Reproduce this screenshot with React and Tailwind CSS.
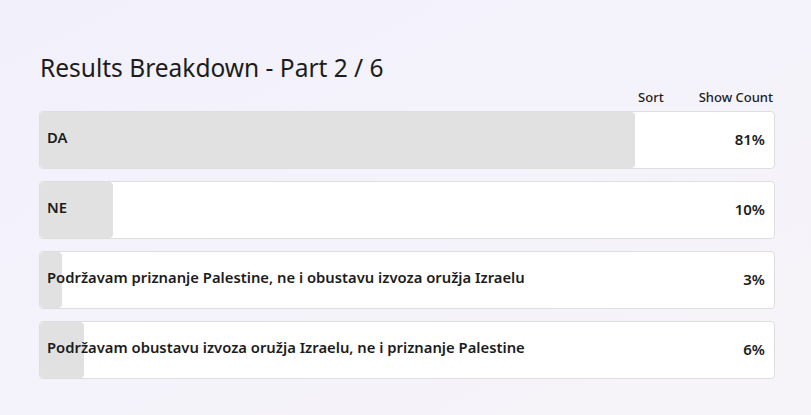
const rows = [
  { label: "DA", pct: 81 },
  { label: "NE", pct: 10 },
  { label: "Podržavam priznanje Palestine, ne i obustavu izvoza oružja Izraelu", pct: 3 },
  { label: "Podržavam obustavu izvoza oružja Izraelu, ne i priznanje Palestine", pct: 6 },
];

export default function App() {
  return (
    <div
      className="h-[415px] w-[811px] overflow-hidden bg-gradient-to-br from-[#f2f0fb] via-[#f4f2fa] to-[#f7f4f9] text-[#1c1c1c]"
      style={{ fontFamily: '"Noto Sans", "Open Sans", sans-serif' }}
    >
      <div className="ml-[39px] w-[736px] pt-[51px]">
        <h1 className="pl-px text-[24.5px] leading-[34px] font-normal">Results Breakdown - Part 2 / 6</h1>
        <div className="mt-[2px] flex justify-end gap-[35px] pr-[2px] text-[13px] leading-[20px] font-medium">
          <span>Sort</span>
          <span>Show Count</span>
        </div>
        <div className="mt-[4px] flex flex-col gap-[12px]">
          {rows.map((row) => (
            <div
              key={row.label}
              className="relative flex h-[58px] items-center overflow-hidden rounded border border-[#dedede] bg-white"
            >
              <div
                className="absolute inset-y-0 left-0 rounded bg-[#e1e1e1]"
                style={{ width: `${row.pct}%` }}
              />
              <span className="relative mb-[5px] ml-[7px] flex-1 text-[14.8px] font-semibold">{row.label}</span>
              <span className="relative mr-[9px] mb-[2px] text-[15px] font-semibold">{row.pct}%</span>
            </div>
          ))}
        </div>
      </div>
    </div>
  );
}
